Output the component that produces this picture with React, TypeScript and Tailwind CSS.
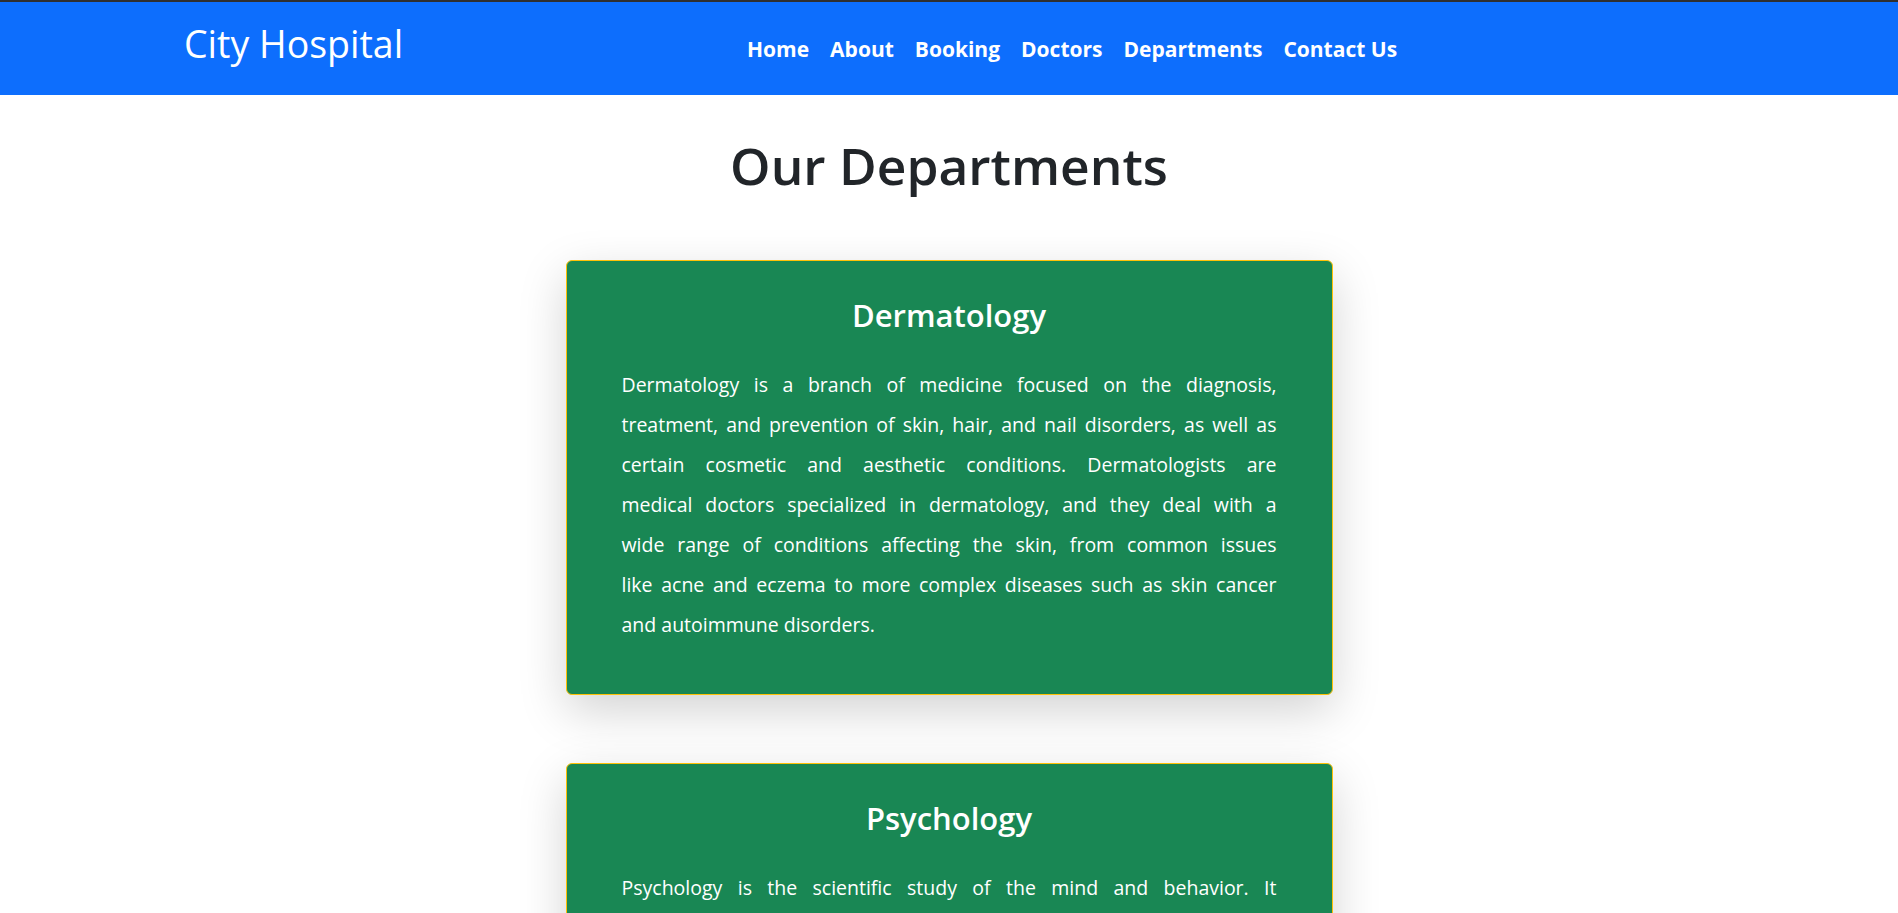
import React from "react";

const navItems = ["Home", "About", "Booking", "Doctors", "Departments", "Contact Us"];

const departments: { title: string; lines: string[] }[] = [
  {
    title: "Dermatology",
    lines: [
      "Dermatology is a branch of medicine focused on the diagnosis,",
      "treatment, and prevention of skin, hair, and nail disorders, as well as",
      "certain cosmetic and aesthetic conditions. Dermatologists are",
      "medical doctors specialized in dermatology, and they deal with a",
      "wide range of conditions affecting the skin, from common issues",
      "like acne and eczema to more complex diseases such as skin cancer",
      "and autoimmune disorders.",
    ],
  },
  {
    title: "Psychology",
    lines: [
      "Psychology is the scientific study of the mind and behavior. It",
      "encompasses a wide range of topics, including perception, cognition,",
      "emotion, personality, and social interactions. Psychologists use",
      "research and clinical methods to understand how people think, feel,",
      "and behave, and to help individuals cope with mental health",
      "conditions and improve their overall well-being.",
    ],
  },
];

function DepartmentCard({ title, lines }: { title: string; lines: string[] }) {
  return (
    <div className="w-[767px] mx-auto rounded-[6px] border border-[#ffc107] bg-[#198754] pt-[36px] pb-[49px] px-[55px] text-white shadow-[0_16px_48px_rgba(0,0,0,0.175)]">
      <h2 className="text-center text-[31px] leading-[36px] font-semibold">{title}</h2>
      <p className="mt-[32px] text-[19.5px] leading-[40px]">
        {lines.map((l, i) => (
          <span
            key={i}
            className={
              i < lines.length - 1
                ? "block whitespace-nowrap text-justify [text-align-last:justify]"
                : "block whitespace-nowrap text-left"
            }
          >
            {l}
          </span>
        ))}
      </p>
    </div>
  );
}

export default function App() {
  return (
    <div className="h-screen overflow-hidden bg-white font-['Open_Sans','Noto_Sans',sans-serif]">
      <div className="h-[2px] bg-[#2f2f2f]" />
      <nav className="h-[93px] bg-[#0d6efd] flex items-start pt-[23px] pl-[184px]">
        <a className="w-[563px] shrink-0 text-[37.5px] leading-none font-normal text-white">City Hospital</a>
        <ul className="mt-[14px] flex items-start gap-[21px]">
          {navItems.map((n) => (
            <li key={n} className="text-[21px] leading-none font-bold text-white">
              {n}
            </li>
          ))}
        </ul>
      </nav>
      <h1 className="mt-[39px] text-center text-[51.5px] leading-[62px] font-semibold text-[#212529]">
        Our Departments
      </h1>
      <div className="mt-[64px] flex flex-col gap-[68px]">
        {departments.map((d) => (
          <DepartmentCard key={d.title} title={d.title} lines={d.lines} />
        ))}
      </div>
    </div>
  );
}
